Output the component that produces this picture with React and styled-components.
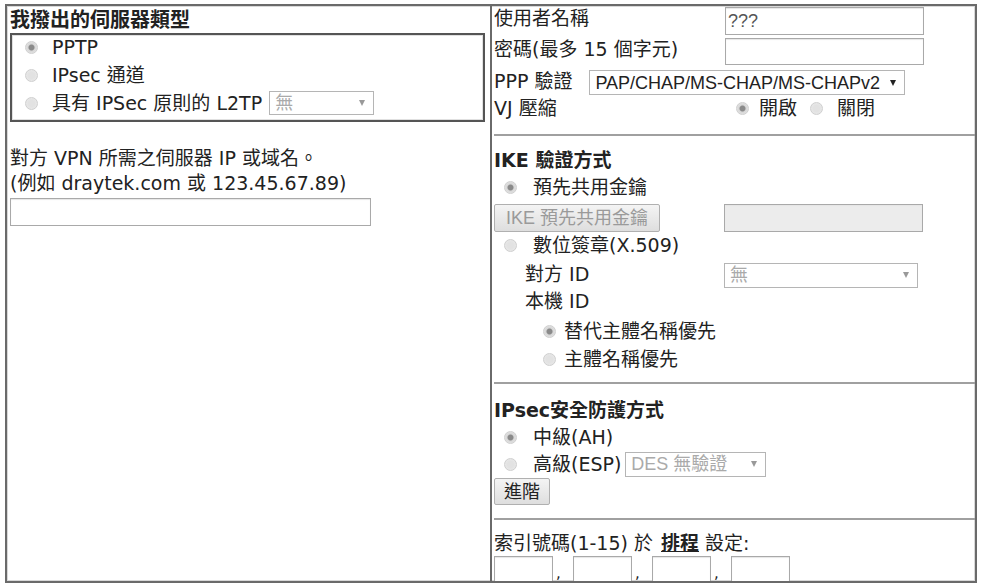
import React from "react";
import styled, { createGlobalStyle } from "styled-components";

const Global = createGlobalStyle`
  html, body { margin: 0; padding: 0; background: #fff; }
  body {
    font-family: "DejaVu Sans", "Noto Sans CJK TC", sans-serif;
    font-size: 19px;
    color: #222;
  }
  * { box-sizing: border-box; }
`;

const Frame = styled.div`
  margin: 4px 0 0 5px;
  width: 972px;
  height: 579px;
  border: 2px solid #6a6a6a;
  box-shadow: inset 0 0 0 1px #d8d8d8;
  display: grid;
  grid-template-columns: 485px 1fr;
  overflow: hidden;
`;

const LeftCol = styled.div`
  border-right: 2px solid #6a6a6a;
  padding: 0 5px 0 3px;
  display: flex;
  flex-direction: column;
`;

const RightCol = styled.div`
  display: flex;
  flex-direction: column;
  padding-left: 2px;
`;

const Heading = styled.div`
  font-weight: bold;
  font-size: ${(p) => p.$size || 19}px;
  line-height: 24px;
  height: ${(p) => p.$h || 24}px;
  margin-top: ${(p) => p.$mt || 0}px;
  display: flex;
  align-items: center;
  white-space: nowrap;
`;

const TypeBox = styled.div`
  height: 89px;
  border: 2px solid #555;
  box-shadow: inset 0 0 0 1px #e0e0e0;
  display: flex;
  flex-direction: column;
  gap: 4px;
`;

const Row = styled.div`
  display: flex;
  align-items: center;
  height: ${(p) => p.$h || 24}px;
  margin-top: ${(p) => p.$mt || 0}px;
  padding-left: ${(p) => p.$pl || 0}px;
  white-space: nowrap;
  line-height: 24px;
`;

const RadioDot = styled.span`
  display: inline-block;
  flex: none;
  width: 13px;
  height: 13px;
  border-radius: 50%;
  border: 1px solid #cfcfcf;
  background: ${(p) =>
    p.$on
      ? "radial-gradient(circle, #8a8a8a 0 2.5px, #d6d6d6 3.5px, #ececec 100%)"
      : "radial-gradient(circle, #e2e2e2 0 3px, #ececec 100%)"};
  margin-left: ${(p) => p.$ml || 0}px;
  margin-right: ${(p) => p.$mr || 14}px;
`;

const Label = styled.span`
  display: inline-block;
  width: ${(p) => (p.$w ? p.$w + "px" : "auto")};
  flex: none;
  padding-bottom: ${(p) => p.$pb || 0}px;
`;

const Note = styled.div`
  margin-top: 24px;
  line-height: 25px;
  white-space: nowrap;
`;

const TextBox = styled.div`
  width: ${(p) => p.$w}px;
  height: ${(p) => p.$h || 28}px;
  margin-top: ${(p) => p.$mt || 0}px;
  border: 1px solid #a9a9a9;
  box-shadow: inset 0 1px 1px #e6e6e6;
  background: ${(p) => (p.$disabled ? "#ececec" : "#fff")};
  font-family: "Liberation Sans", "Noto Sans CJK TC", sans-serif;
  font-size: 18px;
  color: #555;
  display: flex;
  align-items: center;
  padding-left: 2px;
  flex: none;
`;

const Select = styled.div`
  width: ${(p) => p.$w}px;
  height: ${(p) => p.$h || 25}px;
  margin-left: ${(p) => p.$ml || 0}px;
  border: 1px solid #b5b5b5;
  background: #fff;
  font-family: "Liberation Sans", "Noto Sans CJK TC", sans-serif;
  font-size: 18px;
  color: ${(p) => (p.$dim ? "#aaa" : "#222")};
  display: flex;
  align-items: center;
  justify-content: space-between;
  padding: 0 8px 0 5px;
  flex: none;
  white-space: nowrap;
`;

const Arrow = styled.span`
  width: 0;
  height: 0;
  border-left: 3.5px solid transparent;
  border-right: 3.5px solid transparent;
  border-top: 6px solid ${(p) => (p.$dim ? "#999" : "#222")};
  flex: none;
`;

const Button = styled.div`
  height: ${(p) => p.$h || 28}px;
  width: ${(p) => p.$w}px;
  border: 1px solid #b0b0b0;
  border-radius: 2px;
  background: linear-gradient(#f4f4f4, #dedede);
  color: ${(p) => (p.$disabled ? "#9a9a9a" : "#222")};
  font-family: "Liberation Sans", "Noto Sans CJK TC", sans-serif;
  font-size: 18px;
  display: flex;
  align-items: center;
  justify-content: center;
  white-space: nowrap;
  flex: none;
`;

const Section = styled.div`
  height: ${(p) => p.$h}px;
  border-bottom: ${(p) => (p.$last ? "none" : "2px solid #a0a0a0")};
  display: flex;
  flex-direction: column;
  padding-top: ${(p) => p.$pt || 0}px;
  flex: none;
`;

const Spacer = styled.span`
  display: inline-block;
  width: ${(p) => p.$w}px;
  flex: none;
`;

const Link = styled.span`
  font-weight: bold;
  text-decoration: underline;
  margin: 0 6px 0 8px;
`;

const SlotRow = styled.div`
  display: flex;
  align-items: center;
  margin-top: 1px;
`;

const Comma = styled.span`
  width: 20px;
  padding-left: 3px;
  padding-top: 6px;
  font-size: 15px;
  line-height: 16px;
  flex: none;
`;

function Radio({ on, children, ml, mr }) {
  return (
    <>
      <RadioDot $on={on} $ml={ml} $mr={mr} />
      <span>{children}</span>
    </>
  );
}

export default function App() {
  return (
    <>
      <Global />
      <Frame>
        <LeftCol>
          <Heading $h={27} $size={20}>
            我撥出的伺服器類型
          </Heading>
          <TypeBox>
            <Row $h={24} $pl={13}>
              <Radio on mr={14}>PPTP</Radio>
            </Row>
            <Row $h={24} $pl={13}>
              <Radio mr={14}>IPsec 通道</Radio>
            </Row>
            <Row $h={24} $pl={13}>
              <Radio mr={14}>具有 IPSec 原則的 L2TP</Radio>
              <Select $w={105} $h={24} $ml={7} $dim>
                無
                <Arrow $dim />
              </Select>
            </Row>
          </TypeBox>
          <Note>
            對方 VPN 所需之伺服器 IP 或域名。
            <br />
            (例如 draytek.com 或 123.45.67.89)
          </Note>
          <TextBox $w={361} $mt={2} />
        </LeftCol>

        <RightCol>
          <Section $h={130} $pt={1}>
            <Row $h={28}>
              <Label $w={231} $pb={6}>使用者名稱</Label>
              <TextBox $w={199}>???</TextBox>
            </Row>
            <Row $h={27} $mt={3}>
              <Label $w={231} $pb={6}>密碼(最多 15 個字元)</Label>
              <TextBox $w={199} $h={27} />
            </Row>
            <Row $h={25} $mt={5}>
              <Label $pb={4}>PPP 驗證</Label>
              <Select $w={316} $ml={17}>
                PAP/CHAP/MS-CHAP/MS-CHAPv2
                <Arrow />
              </Select>
            </Row>
            <Row $h={24} $mt={1}>
              <Label $w={231}>VJ 壓縮</Label>
              <Radio on ml={11} mr={10}>開啟</Radio>
              <Spacer $w={13} />
              <Radio mr={14}>關閉</Radio>
            </Row>
          </Section>

          <Section $h={248} $pt={12}>
            <Heading>IKE 驗證方式</Heading>
            <Row $mt={3}>
              <Radio on ml={10} mr={16}>預先共用金鑰</Radio>
            </Row>
            <Row $h={28} $mt={5}>
              <Button $w={166} $disabled>IKE 預先共用金鑰</Button>
              <Spacer $w={64} />
              <TextBox $w={199} $disabled />
            </Row>
            <Row $mt={1}>
              <Radio ml={10} mr={16}>數位簽章(X.509)</Radio>
            </Row>
            <Row $h={26} $mt={5}>
              <Label $w={230} $pb={2}>
                <Spacer $w={31} />
                對方 ID
              </Label>
              <Select $w={194} $dim>
                無
                <Arrow $dim />
              </Select>
            </Row>
            <Row $mt={1}>
              <Spacer $w={31} />
              本機 ID
            </Row>
            <Row $mt={6}>
              <Radio on ml={49} mr={8}>替代主體名稱優先</Radio>
            </Row>
            <Row $mt={4}>
              <Radio ml={49} mr={8}>主體名稱優先</Radio>
            </Row>
          </Section>

          <Section $h={136} $pt={14}>
            <Heading>IPsec安全防護方式</Heading>
            <Row $mt={3}>
              <Radio on ml={10} mr={16}>中級(AH)</Radio>
            </Row>
            <Row $h={26} $mt={2}>
              <Radio ml={10} mr={16}>高級(ESP)</Radio>
              <Select $w={141} $ml={4} $dim>
                DES 無驗證
                <Arrow $dim />
              </Select>
            </Row>
            <Row $h={27} $mt={1}>
              <Button $w={56} $h={27}>進階</Button>
            </Row>
          </Section>

          <Section $h={70} $pt={11} $last>
            <Row>
              索引號碼(1-15) 於<Link>排程</Link>設定:
            </Row>
            <SlotRow>
              <TextBox $w={59} />
              <Comma>,</Comma>
              <TextBox $w={59} />
              <Comma>,</Comma>
              <TextBox $w={59} />
              <Comma>,</Comma>
              <TextBox $w={59} />
            </SlotRow>
          </Section>
        </RightCol>
      </Frame>
    </>
  );
}
